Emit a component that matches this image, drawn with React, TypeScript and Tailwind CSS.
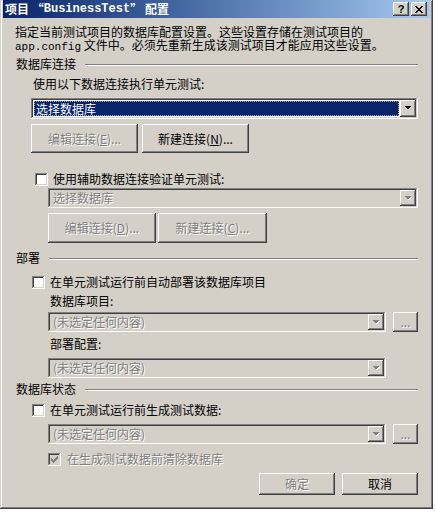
const raised =
  'shadow-[inset_-1px_-1px_#404040,inset_1px_1px_#ffffff,inset_-2px_-2px_#808080,inset_2px_2px_#d4d0c8]';
const sunken =
  'shadow-[inset_-1px_-1px_#ffffff,inset_1px_1px_#808080,inset_-2px_-2px_#d4d0c8,inset_2px_2px_#404040]';
const dim = 'text-[#808080] [text-shadow:1px_1px_0_#ffffff]';

function Arrow({ disabled }: { disabled?: boolean }) {
  return (
    <svg width="8" height="5" viewBox="0 0 8 5" shapeRendering="crispEdges">
      {disabled && <path d="M1 1h7L4.5 4.5z" fill="#ffffff" />}
      <path d="M0 0h7L3.5 3.5z" fill={disabled ? '#808080' : '#000000'} />
    </svg>
  );
}

function DropButton({ disabled }: { disabled?: boolean }) {
  return (
    <div className={`w-[16px] h-full shrink-0 bg-[#d4d0c8] flex items-center justify-center ${raised}`}>
      <Arrow disabled={disabled} />
    </div>
  );
}

function Select({
  text,
  disabled,
  highlighted,
  className,
}: {
  text: string;
  disabled?: boolean;
  highlighted?: boolean;
  className: string;
}) {
  return (
    <div className={`p-[2px] flex ${sunken} ${disabled ? 'bg-[#d4d0c8]' : 'bg-white'} ${className}`}>
      <div className="flex-1 flex p-[1px] pr-[1px]">
        {highlighted ? (
          <div className="flex-1 flex items-center bg-[#0a246a] text-white border border-dotted border-[#9aa6c8] pl-[1px]">
            {text}
          </div>
        ) : (
          <div className={`flex-1 flex items-center pl-[2px] ${dim}`}>{text}</div>
        )}
      </div>
      <DropButton disabled={disabled} />
    </div>
  );
}

function Button({
  children,
  disabled,
  className,
}: {
  children: React.ReactNode;
  disabled?: boolean;
  className: string;
}) {
  return (
    <div
      className={`flex items-center justify-center bg-[#d4d0c8] whitespace-nowrap ${raised} ${
        disabled ? dim : 'text-black'
      } ${className}`}
    >
      {children}
    </div>
  );
}

function Check({ checked, disabled }: { checked?: boolean; disabled?: boolean }) {
  return (
    <div
      className={`w-[13px] h-[13px] shrink-0 flex items-center justify-center ${sunken} ${
        disabled ? 'bg-[#d4d0c8]' : 'bg-white'
      }`}
    >
      {checked && (
        <svg width="7" height="7" viewBox="0 0 7 7" shapeRendering="crispEdges">
          <path
            d="M6 0h1v3h-1v1h-1v1h-1v1h-1v1h-1v-1h-1v-1h-1v-3h1v1h1v1h1v-1h1v-1h1z"
            fill={disabled ? '#808080' : '#000000'}
          />
        </svg>
      )}
    </div>
  );
}

function GroupTitle({ text, className }: { text: string; className: string }) {
  return (
    <div className={`h-[12px] flex items-center gap-[9px] pl-[1px] ${className}`}>
      <span className="whitespace-nowrap">{text}</span>
      <div className="flex-1 mt-[1px] h-0 border-t border-b border-t-[#808080] border-b-white" />
    </div>
  );
}

function TitleBar() {
  return (
    <div className="h-[18px] shrink-0 flex items-center justify-between pl-[2px] pr-[3px] bg-linear-to-r from-[#0a246a] to-[#a6caf0]">
      <div className="flex items-center text-white font-bold text-[12px] whitespace-nowrap">
        <span>项目 “</span>
        <span className="font-['Liberation_Mono',monospace]">BusinessTest</span>
        <span>” 配置</span>
      </div>
      <div className="flex gap-[2px]">
        <div className={`w-[16px] h-[14px] bg-[#d4d0c8] flex items-center justify-center ${raised}`}>
          <span className="font-['Liberation_Sans',sans-serif] font-bold text-[11px] leading-none text-black">
            ?
          </span>
        </div>
        <div className={`w-[16px] h-[14px] bg-[#d4d0c8] flex items-center justify-center ${raised}`}>
          <svg width="8" height="7" viewBox="0 0 8 7" shapeRendering="crispEdges">
            <path
              d="M0 0h2v1h1v1h2v-1h1v-1h2v1h-1v1h-1v1h-1v1h1v1h1v1h1v1h-2v-1h-1v-1h-2v1h-1v1h-2v-1h1v-1h1v-1h1v-1h-1v-1h-1v-1h-1z"
              fill="#000000"
            />
          </svg>
        </div>
      </div>
    </div>
  );
}

export default function App() {
  return (
    <div className="w-[436px] h-[512px] bg-white font-['Noto_Sans_CJK_SC','Noto_Sans',sans-serif] text-[12px] leading-[12px] text-black">
      <div className="w-[433px] h-[509px] bg-[#d4d0c8] px-[3px] pb-[3px] flex flex-col shadow-[inset_-1px_-1px_#404040,inset_1px_1px_#d4d0c8,inset_-2px_-2px_#808080,inset_2px_2px_#ffffff]">
        <TitleBar />
        <div className="px-[12px] flex flex-col">
          <div className="mt-[8px] flex flex-col whitespace-nowrap">
            <div className="h-[12px] leading-[12px]">
              指定当前测试项目的数据库配置设置。这些设置存储在测试项目的
            </div>
            <div className="h-[12px] mt-[1px] leading-[12px]">
              <span className="font-['Liberation_Mono',monospace] text-[11px]">app.config</span> 文件中。必须先重新生成该测试项目才能应用这些设置。
            </div>
          </div>

          <GroupTitle text="数据库连接" className="mt-[7px]" />
          <div className="mt-[8px] ml-[18px] h-[12px] whitespace-nowrap">使用以下数据连接执行单元测试:</div>
          <Select text="选择数据库" highlighted className="mt-[8px] ml-[16px] h-[21px]" />
          <div className="mt-[5px] ml-[16px] flex gap-[4px]">
            <Button disabled className="w-[107px] h-[29px]">
              编辑连接(<u>E</u>)...
            </Button>
            <Button className="w-[107px] h-[29px]">
              新建连接(<u>N</u>)...
            </Button>
          </div>
          <div className="mt-[18px] ml-[20px] h-[16px] flex items-center gap-[5px]">
            <Check />
            <span className="whitespace-nowrap">使用辅助数据连接验证单元测试:</span>
          </div>
          <Select text="选择数据库" disabled className="mt-[1px] ml-[33px] h-[20px]" />
          <div className="mt-[5px] ml-[33px] flex gap-[2px]">
            <Button disabled className="w-[108px] h-[30px]">
              编辑连接(<u>D</u>)...
            </Button>
            <Button disabled className="w-[109px] h-[30px]">
              新建连接(<u>C</u>)...
            </Button>
          </div>

          <GroupTitle text="部署" className="mt-[9px]" />
          <div className="mt-[10px] ml-[17px] h-[16px] flex items-center gap-[5px]">
            <Check />
            <span className="whitespace-nowrap">在单元测试运行前自动部署该数据库项目</span>
          </div>
          <div className="mt-[5px] ml-[35px] h-[12px]">数据库项目:</div>
          <div className="mt-[5px] ml-[33px] flex gap-[7px]">
            <Select text="(未选定任何内容)" disabled className="w-[338px] h-[20px]" />
            <Button disabled className="w-[25px] h-[20px]">
              ...
            </Button>
          </div>
          <div className="mt-[6px] ml-[35px] h-[12px]">部署配置:</div>
          <Select text="(未选定任何内容)" disabled className="mt-[8px] ml-[33px] w-[338px] h-[20px]" />

          <GroupTitle text="数据库状态" className="mt-[5px]" />
          <div className="mt-[7px] ml-[17px] h-[16px] flex items-center gap-[5px]">
            <Check />
            <span className="whitespace-nowrap">在单元测试运行前生成测试数据:</span>
          </div>
          <div className="mt-[6px] ml-[33px] flex gap-[7px]">
            <Select text="(未选定任何内容)" disabled className="w-[338px] h-[20px]" />
            <Button disabled className="w-[25px] h-[20px]">
              ...
            </Button>
          </div>
          <div className="mt-[7px] ml-[33px] h-[16px] flex items-center gap-[6px]">
            <Check checked disabled />
            <span className={`whitespace-nowrap ${dim}`}>在生成测试数据前清除数据库</span>
          </div>
          <div className="mt-[6px] flex justify-end gap-[7px]">
            <Button disabled className="w-[76px] h-[22px]">
              确定
            </Button>
            <Button className="w-[76px] h-[22px]">取消</Button>
          </div>
        </div>
      </div>
    </div>
  );
}
